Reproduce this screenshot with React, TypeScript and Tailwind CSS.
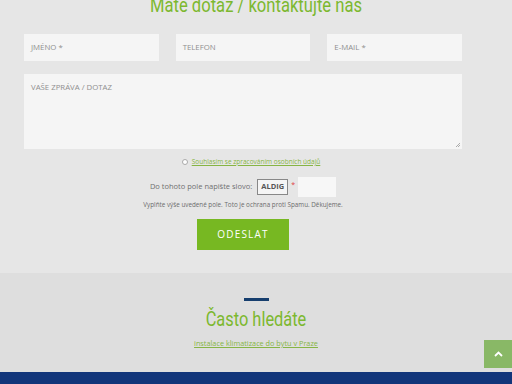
import React from "react";

export default function App() {
  const roboto = { fontFamily: "Roboto, 'Open Sans', sans-serif" };
  return (
    <div
      className="relative w-[512px] h-[384px] overflow-hidden bg-[#e6e6e6] flex flex-col"
      style={{ fontFamily: "'Open Sans', 'Liberation Sans', sans-serif" }}
    >
      <section className="h-[273px] shrink-0 bg-[#e6e6e6] flex flex-col">
        <div className="mt-[-6px] h-[24px] flex justify-center">
          <h2
            className="inline-block scale-y-[1.2] text-[16.6px] leading-[24px] text-[#7cb82f] font-normal"
            style={roboto}
          >
            Máte dotaz / kontaktujte nás
          </h2>
        </div>
        <div className="ml-[24px] w-[438px] flex flex-col">
          <div className="mt-[16px] grid grid-cols-3 gap-[17px]">
            {["JMÉNO *", "TELEFON", "E-MAIL *"].map((p) => (
              <div
                key={p}
                className="h-[27px] bg-[#f5f5f5] flex items-center pl-[7px] text-[7.8px] text-[#8f8f8f]"
              >
                {p}
              </div>
            ))}
          </div>
          <div className="relative mt-[13px] h-[75px] bg-[#f5f5f5] pl-[7px] pt-[8px] text-[7.8px] leading-[10px] text-[#8f8f8f]">
            VAŠE ZPRÁVA / DOTAZ
            <svg
              className="absolute right-[1px] bottom-[1px]"
              width="6"
              height="6"
              viewBox="0 0 6 6"
            >
              <path d="M5 1 L1 5 M5 3 L3 5" stroke="#999" strokeWidth="0.8" />
            </svg>
          </div>
          <div className="mt-[8px] flex items-center justify-center gap-[4px] pl-[16px]">
            <span className="w-[6px] h-[6px] rounded-full border border-[#aaa] bg-white"></span>
            <a className="text-[6.5px] leading-[9px] text-[#86b544] underline">
              Souhlasím se zpracováním osobních údajů
            </a>
          </div>
          <div className="mt-[11px] flex items-center justify-center">
            <span className="text-[7.5px] text-[#707070]">Do tohoto pole napište slovo:</span>
            <span className="ml-[5px] h-[16px] w-[31px] border border-[#888] bg-[#f5f5f5] flex items-center justify-center text-[7.5px] font-bold text-[#555]">
              ALDIG
            </span>
            <span className="ml-[3px] mb-[4px] text-[7px] text-[#e04040]">*</span>
            <span className="ml-[3px] h-[20px] w-[38px] bg-[#f7f7f7]"></span>
          </div>
          <div className="mt-[3px] text-center text-[6.3px] leading-[10px] text-[#6c6c6c]">
            Vyplňte výše uvedené pole. Toto je ochrana proti Spamu. Děkujeme.
          </div>
          <div className="mt-[9px] flex justify-center">
            <button className="w-[92px] h-[31px] bg-[#77b822] text-white text-[10px] tracking-[1.2px] flex items-center justify-center">
              ODESLAT
            </button>
          </div>
        </div>
      </section>
      <section className="h-[99px] shrink-0 bg-[#dedede] flex flex-col items-center">
        <div className="mt-[25px] w-[25px] h-[3px] bg-[#163e6e]"></div>
        <div className="mt-[7px] h-[24px] flex justify-center">
          <h3
            className="inline-block scale-y-[1.2] text-[16.4px] leading-[24px] text-[#7cb82f] font-normal"
            style={roboto}
          >
            Často hledáte
          </h3>
        </div>
        <a className="mt-[6px] text-[7.3px] leading-[10px] text-[#86b544] underline">
          instalace klimatizace do bytu v Praze
        </a>
      </section>
      <div className="h-[12px] shrink-0 bg-[#12357a]"></div>
      <div className="absolute left-[484px] top-[340px] w-[28px] h-[28px] bg-[#89b866] flex items-center justify-center">
        <svg width="9" height="6" viewBox="0 0 9 6">
          <path d="M1 5 L4.5 1.5 L8 5" stroke="white" strokeWidth="1.8" fill="none" />
        </svg>
      </div>
    </div>
  );
}
